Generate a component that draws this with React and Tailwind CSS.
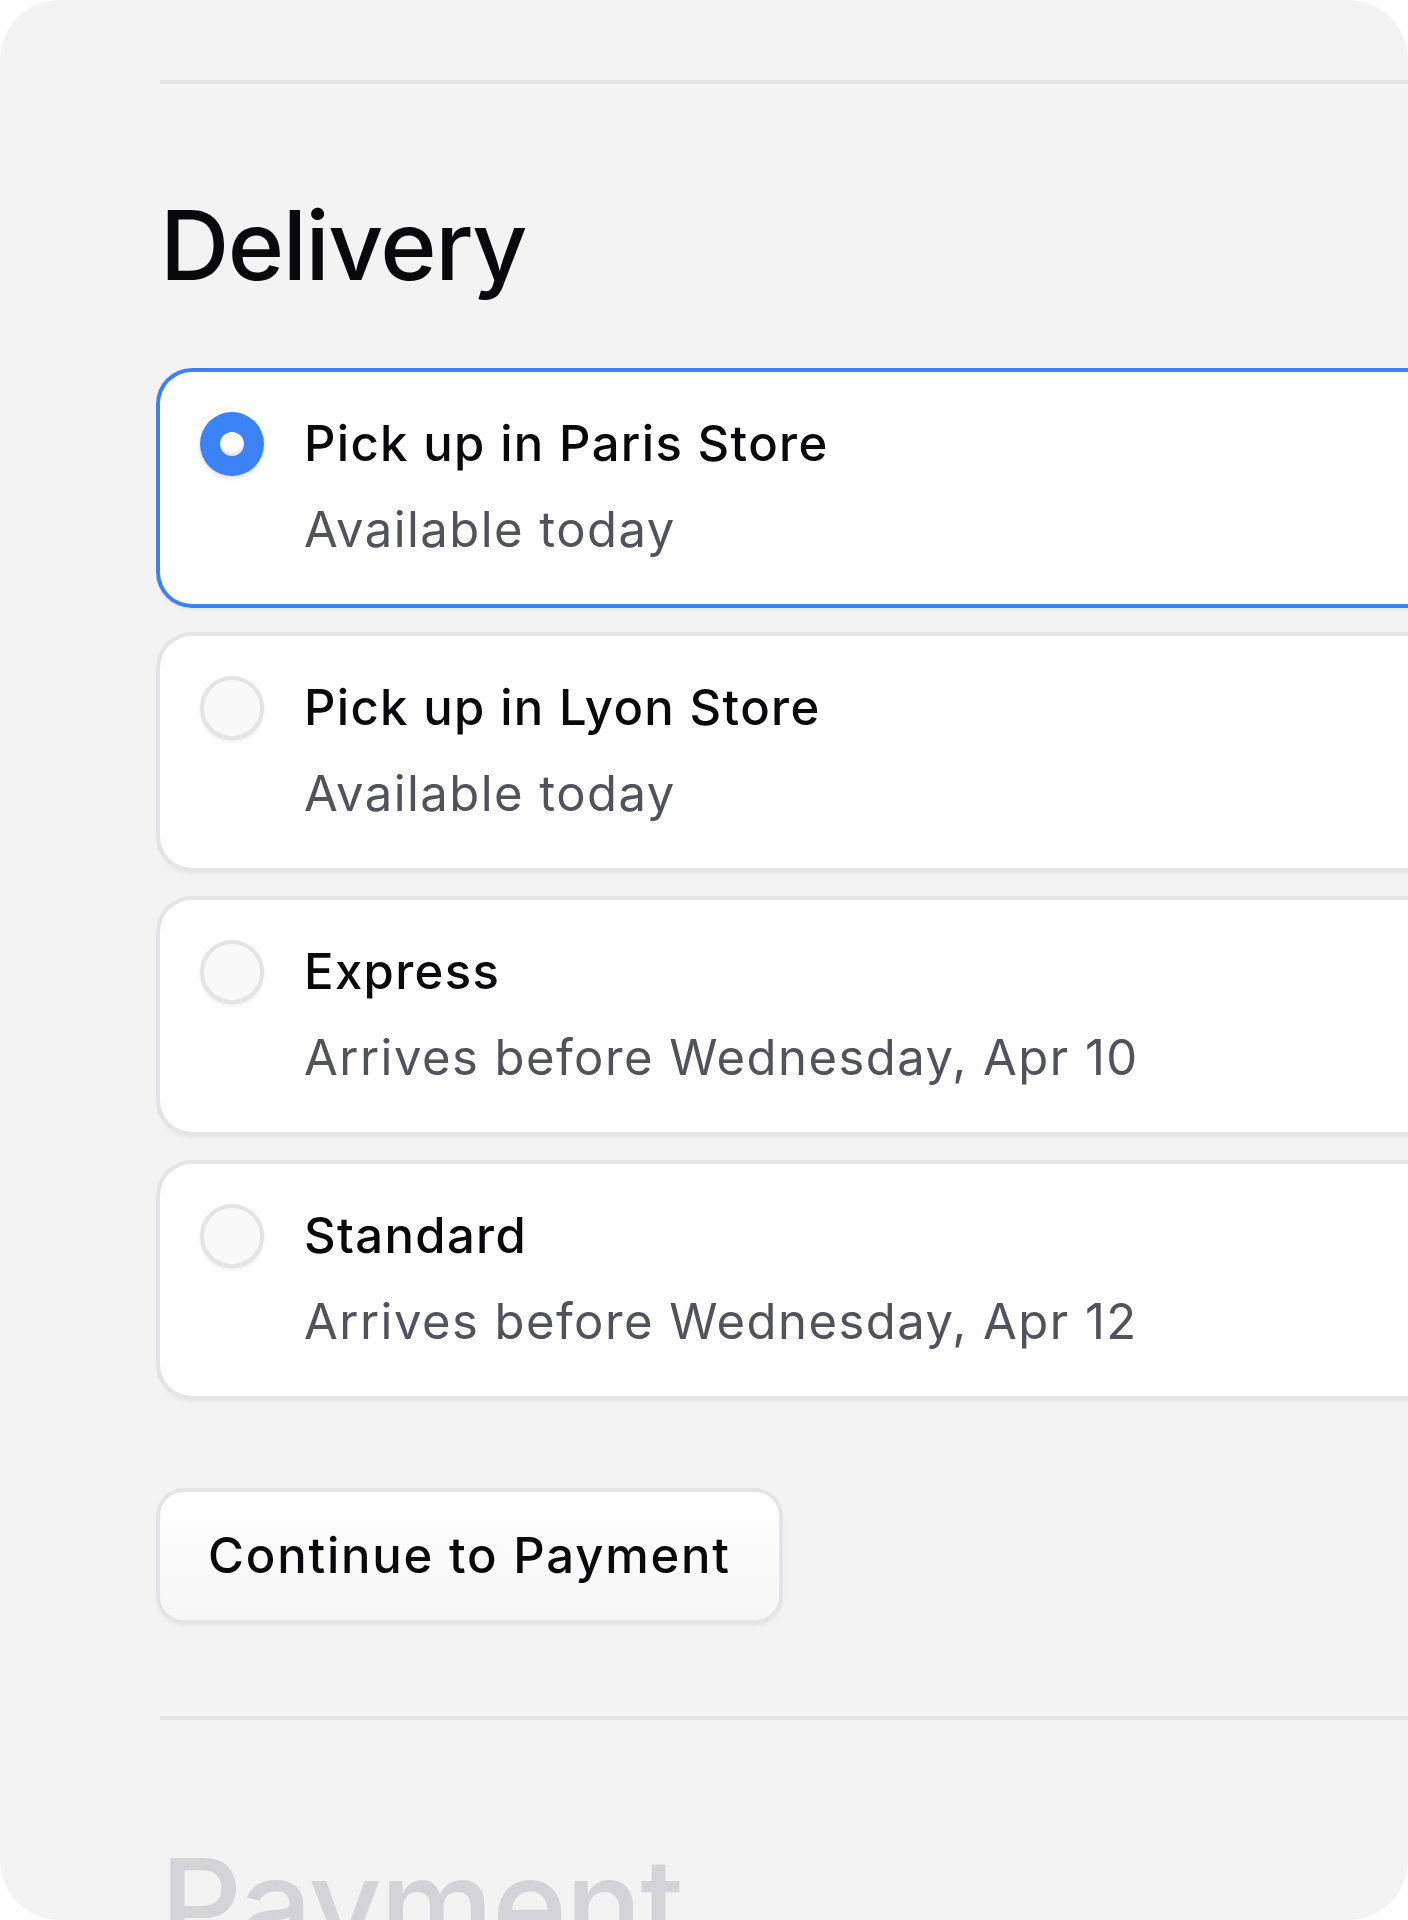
import React from "react";

const options = [
  { title: "Pick up in Paris Store", sub: "Available today", selected: true },
  { title: "Pick up in Lyon Store", sub: "Available today", selected: false },
  { title: "Express", sub: "Arrives before Wednesday, Apr 10", selected: false },
  { title: "Standard", sub: "Arrives before Wednesday, Apr 12", selected: false },
];

function Radio({ selected }) {
  if (selected) {
    return (
      <div className="flex h-[64px] w-[64px] shrink-0 items-center justify-center rounded-full bg-[#3b82f6] shadow-[0_2px_4px_rgba(0,0,0,0.15)]">
        <div className="h-[24px] w-[24px] rounded-full bg-white shadow-[inset_0_-3px_3px_rgba(0,0,0,0.12)]" />
      </div>
    );
  }
  return (
    <div className="h-[64px] w-[64px] shrink-0 rounded-full border-4 border-[#e4e4e7] bg-[#f9f9f9] shadow-[0_2px_3px_rgba(0,0,0,0.08)]" />
  );
}

function Card({ title, sub, selected }) {
  return (
    <div
      className={
        selected
          ? "flex items-start gap-[40px] rounded-[32px] bg-white px-[40px] pt-[40px] pb-[42px] ring-4 ring-[#3b82f6] shadow-[0_4px_6px_rgba(0,0,0,0.08)]"
          : "flex items-start gap-[40px] rounded-[32px] bg-white px-[40px] pt-[40px] pb-[42px] ring-4 ring-[#e4e4e7] shadow-[0_4px_6px_rgba(0,0,0,0.10)]"
      }
    >
      <Radio selected={selected} />
      <div className="flex flex-col">
        <div className="text-[49px] font-medium leading-[64px] tracking-[1.35px] text-[#09090b]">{title}</div>
        <div className="mt-[22px] text-[49px] font-normal leading-[64px] tracking-[1.45px] text-[#52525b]">{sub}</div>
      </div>
    </div>
  );
}

export default function App() {
  return (
    <div className="bg-white" style={{ fontFamily: "Inter, 'Noto Sans', sans-serif" }}>
      <div className="h-[1920px] w-[1408px] overflow-hidden rounded-[60px] bg-[#f3f3f3] pl-[160px] pt-[80px]">
        <div className="w-[1400px]">
          <div className="h-[4px] bg-[#e4e4e7]" />
          <h2 className="mt-[113px] text-[96px] font-medium leading-none tracking-[-0.015em] text-[#09090b]">
            Delivery
          </h2>
          <div className="mt-[79px] flex flex-col gap-[32px]">
            {options.map((o) => (
              <Card key={o.title} {...o} />
            ))}
          </div>
          <button className="mt-[96px] h-[128px] rounded-[24px] bg-gradient-to-b from-white to-[#f7f7f7] px-[48px] text-[49px] font-medium leading-[64px] tracking-[1.8px] text-[#09090b] ring-4 ring-[#e4e4e7] shadow-[0_4px_6px_rgba(0,0,0,0.10)]">
            Continue to Payment
          </button>
          <div className="mt-[96px] h-[4px] bg-[#e4e4e7]" />
          <h2 className="mt-[121px] text-[128px] font-medium leading-none tracking-[-0.015em] text-[#d4d4d8]">
            Payment
          </h2>
        </div>
      </div>
    </div>
  );
}
